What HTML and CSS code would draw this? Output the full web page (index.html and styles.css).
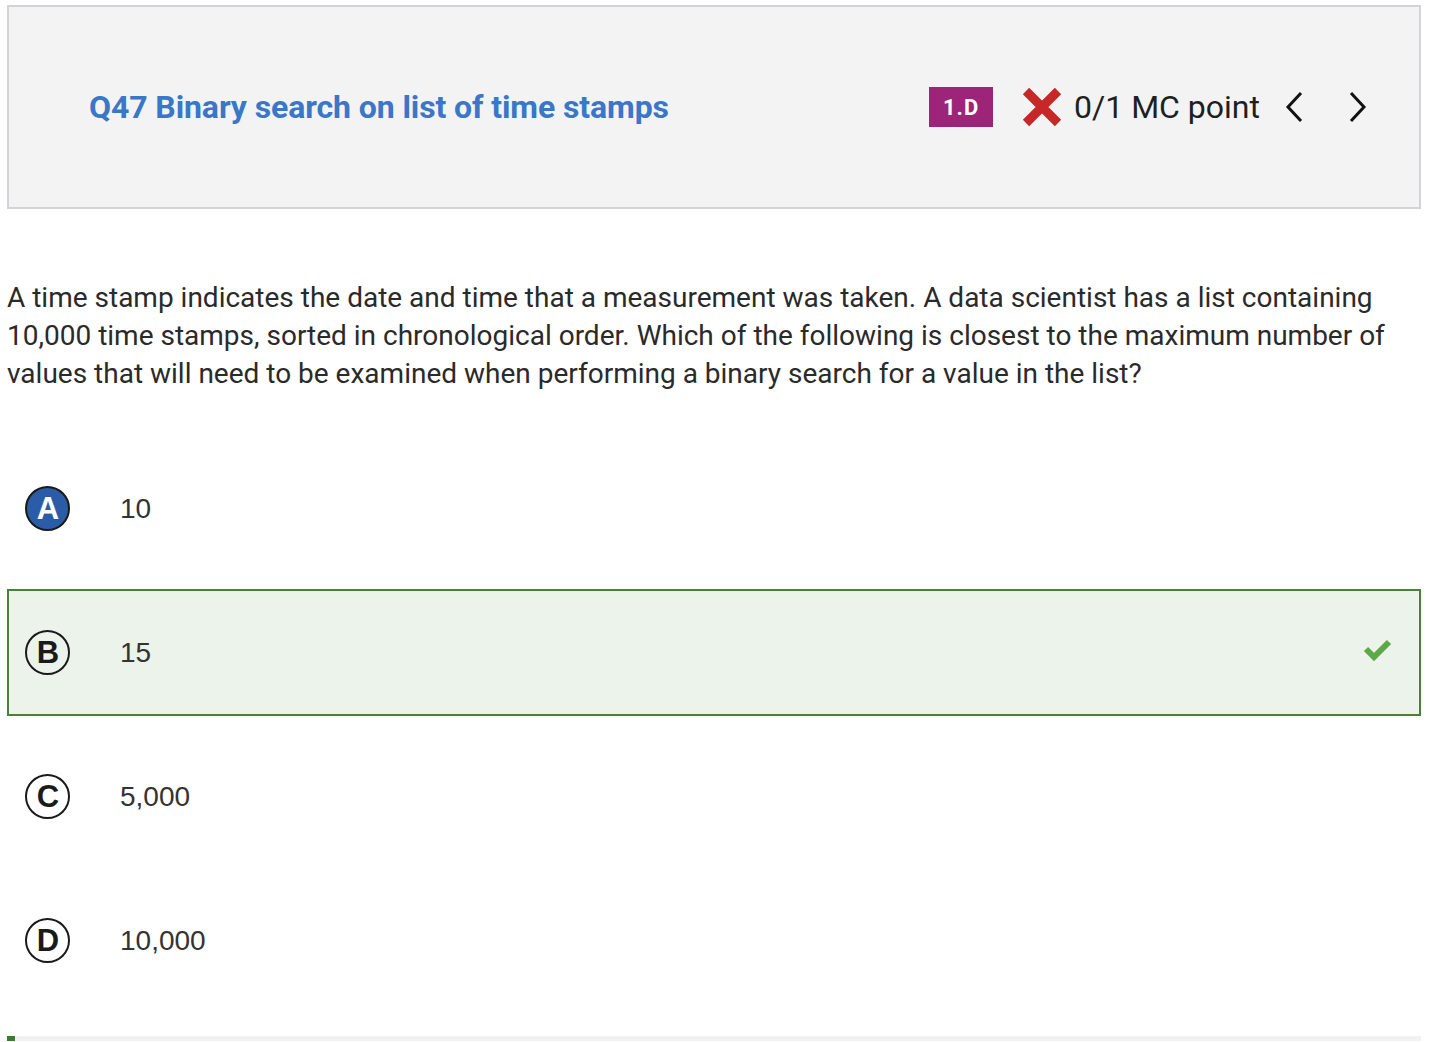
FILE: index.html
```html
<!DOCTYPE html>
<html>
<head>
<meta charset="utf-8">
<link rel="stylesheet" href="styles.css">
</head>
<body>
<div class="page">
  <header class="qhead">
    <h1 class="qtitle">Q47 Binary search on list of time stamps</h1>
    <div class="qmeta">
      <span class="badge">1.D</span>
      <svg class="xicon" width="42" height="42" viewBox="0 0 42 42"><path d="M5 5 L37 37 M37 5 L5 37" stroke="#c62828" stroke-width="9" fill="none"/></svg>
      <span class="score">0/1 MC point</span>
      <svg class="chev" width="24" height="34" viewBox="0 0 24 34"><path d="M18 3 L5 17 L18 31" stroke="#111" stroke-width="3" fill="none"/></svg>
      <svg class="chev" width="24" height="34" viewBox="0 0 24 34"><path d="M6 3 L19 17 L6 31" stroke="#111" stroke-width="3" fill="none"/></svg>
    </div>
  </header>

  <p class="question">A time stamp indicates the date and time that a measurement was taken. A data scientist has a list containing 10,000 time stamps, sorted in chronological order. Which of the following is closest to the maximum number of values that will need to be examined when performing a binary search for a value in the list?</p>

  <div class="options">
    <div class="opt">
      <span class="letter chosen">A</span>
      <span class="val">10</span>
    </div>
    <div class="opt correct">
      <span class="letter">B</span>
      <span class="val">15</span>
      <svg class="check" width="30" height="26" viewBox="0 0 30 26"><path d="M3 12 L11 20 L26 5" stroke="#5ea84a" stroke-width="6" fill="none"/></svg>
    </div>
    <div class="opt">
      <span class="letter">C</span>
      <span class="val">5,000</span>
    </div>
    <div class="opt">
      <span class="letter">D</span>
      <span class="val">10,000</span>
    </div>
  </div>

  <div class="progress"><span class="progress-fill"></span></div>
</div>
</body>
</html>
```

FILE: styles.css
```css
* { box-sizing: border-box; }
html, body { margin: 0; padding: 0; background: #fff; }
body { font-family: Roboto, "Noto Sans", sans-serif; color: #222; }
.page { padding: 5px 29px 0 7px; width: 1450px; }
.qhead {
  height: 204px;
  border: 2px solid #d3d3d7;
  background: #f3f3f3;
  display: flex;
  align-items: center;
  justify-content: space-between;
  padding: 0 50px 0 80px;
}
.qtitle {
  margin: 0;
  font-size: 32px;
  font-weight: 700;
  color: #3a77c6;
  letter-spacing: -0.1px;
}
.qmeta { display: flex; align-items: center; }
.badge {
  background: #9c2479;
  color: #fff;
  font-weight: 700;
  font-size: 22px;
  width: 64px;
  height: 40px;
  display: flex;
  align-items: center;
  justify-content: center;
  letter-spacing: 1px;
  margin-right: 28px;
}
.xicon { margin-right: 11px; }
.score { font-size: 32px; color: #1f1f1f; margin-right: 23px; }
.chev + .chev { margin-left: 38px; }
.question {
  margin: 70px 0 0 0;
  font-size: 28px;
  line-height: 38px;
  color: #2a2a2a;
}
.options { margin-top: 52px; }
.opt {
  height: 127px;
  margin-bottom: 17px;
  display: flex;
  align-items: center;
  padding: 0 26px 0 16px;
  border: 2px solid transparent;
  font-family: "Liberation Sans", Arial, sans-serif;
}
.opt + .opt { margin-top: 0; }
.opt.correct { border-color: #4a8038; background: #ebf3ea; }
.letter {
  width: 45px;
  height: 45px;
  border-radius: 50%;
  border: 2px solid #1a1a1a;
  display: flex;
  align-items: center;
  justify-content: center;
  font-weight: 700;
  font-size: 31px;
  color: #1a1a1a;
  background: #fff;
  flex: none;
  letter-spacing: -1px;
}
.opt.correct .letter { background: transparent; }
.letter.chosen { background: #2a5ca8; color: #fff; }
.val { margin-left: 50px; font-size: 28px; color: #333; flex: 1; }
.check { flex: none; margin-top: -6px; }
.progress {
  margin-top: 32px;
  height: 5px;
  background: #f1f1f1;
}
.progress-fill { display: block; width: 8px; height: 5px; background: #3f7a32; }
```
